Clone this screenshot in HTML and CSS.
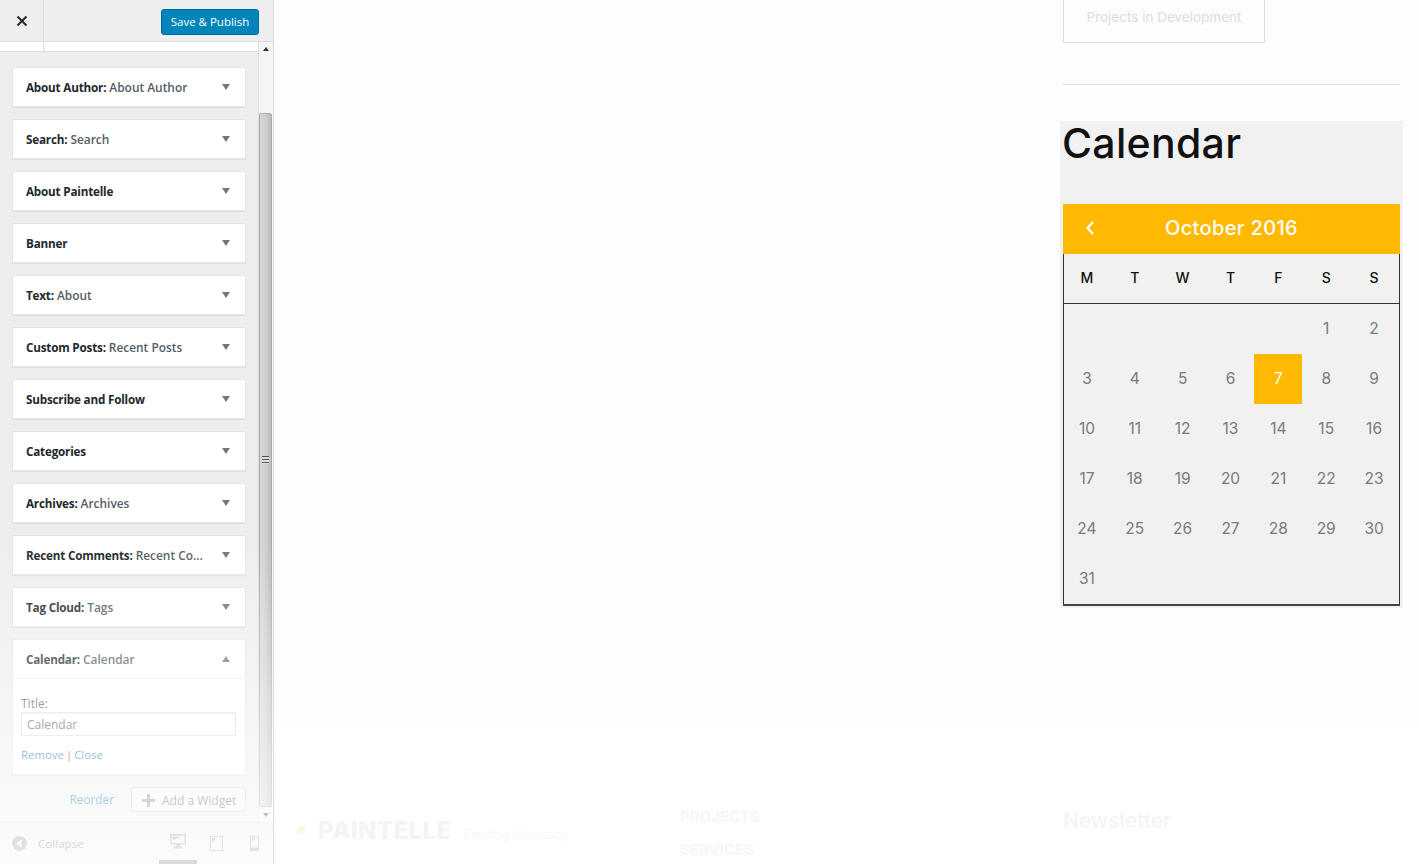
FILE: index.html
```html
<!DOCTYPE html>
<html>
<head>
    <title>Customize: Widgets</title>
    <link rel="stylesheet" href="styles.css">
</head>
<body>
    <div id="sidebar">
        <div id="side-header">
            <div id="close-btn">
                <svg width="12" height="12" viewBox="0 0 12 12"><path d="M1.5 1.5l9 9M10.5 1.5l-9 9" stroke="#23282d" stroke-width="2" fill="none"/></svg>
            </div>
            <button id="save-btn">Save &amp; Publish</button>
        </div>
        <div id="side-scroll">
            <div id="side-panel">
                <div id="panel-strip"><span id="strip-line"></span></div>
                <div id="widget-list">
                    <div class="widget"><div class="widget-top"><span class="widget-name"><b>About Author:</b> About Author</span><span class="arrow-down"></span></div></div>
                    <div class="widget"><div class="widget-top"><span class="widget-name"><b>Search:</b> Search</span><span class="arrow-down"></span></div></div>
                    <div class="widget"><div class="widget-top"><span class="widget-name"><b>About Paintelle</b></span><span class="arrow-down"></span></div></div>
                    <div class="widget"><div class="widget-top"><span class="widget-name"><b>Banner</b></span><span class="arrow-down"></span></div></div>
                    <div class="widget"><div class="widget-top"><span class="widget-name"><b>Text:</b> About</span><span class="arrow-down"></span></div></div>
                    <div class="widget"><div class="widget-top"><span class="widget-name"><b>Custom Posts:</b> Recent Posts</span><span class="arrow-down"></span></div></div>
                    <div class="widget"><div class="widget-top"><span class="widget-name"><b>Subscribe and Follow</b></span><span class="arrow-down"></span></div></div>
                    <div class="widget"><div class="widget-top"><span class="widget-name"><b>Categories</b></span><span class="arrow-down"></span></div></div>
                    <div class="widget"><div class="widget-top"><span class="widget-name"><b>Archives:</b> Archives</span><span class="arrow-down"></span></div></div>
                    <div class="widget"><div class="widget-top"><span class="widget-name"><b>Recent Comments:</b> Recent Co...</span><span class="arrow-down"></span></div></div>
                    <div class="widget"><div class="widget-top"><span class="widget-name"><b>Tag Cloud:</b> Tags</span><span class="arrow-down"></span></div></div>
                    <div class="widget">
                        <div class="widget-top open"><span class="widget-name"><b>Calendar:</b> Calendar</span><span class="arrow-up"></span></div>
                        <div class="widget-body">
                            <label for="cal-title">Title:</label>
                            <input type="text" id="cal-title" value="Calendar">
                            <div class="widget-links"><a href="#">Remove</a> <span>|</span> <a href="#">Close</a></div>
                        </div>
                    </div>
                </div>
                <div id="widget-actions">
                    <a href="#" id="reorder">Reorder</a>
                    <button id="add-widget">
                        <svg width="13" height="13" viewBox="0 0 13 13"><path d="M6.5 0v13M0 6.5h13" stroke="#82878c" stroke-width="3" fill="none"/></svg>
                        Add a Widget
                    </button>
                </div>
            </div>
            <div id="scrollbar">
                <div class="scroll-btn"><span class="scroll-up"></span></div>
                <div id="scroll-track">
                    <div id="scroll-thumb"><span id="scroll-grip"></span></div>
                </div>
                <div class="scroll-btn"><span class="scroll-down"></span></div>
            </div>
        </div>
        <div id="side-footer">
            <div id="collapse">
                <svg width="15" height="15" viewBox="0 0 15 15"><circle cx="7.5" cy="7.5" r="7.5" fill="#82878c"/><path d="M9.5 3.5v8l-5-4z" fill="#fff"/></svg>
                <span>Collapse</span>
            </div>
            <div id="devices">
                <span class="device active">
                    <svg width="16" height="15" viewBox="0 0 16 15"><path d="M0 0h16v10.500H0zM1.500 1.500v7.500h13V1.500zM6 10.500h4V12.500h2.500V14.500h-9V12.500H6z" fill="#82878c" fill-rule="evenodd"/><path d="M2.500 2.500h8l-8 4z" fill="#82878c"/></svg>
                </span>
                <span class="device">
                    <svg width="13" height="15" viewBox="0 0 13 15"><path d="M0 0h13v15H0zM1 1v13h11V1z" fill="#82878c" fill-rule="evenodd"/><path d="M2 2h5l-5 4z" fill="#82878c"/></svg>
                </span>
                <span class="device">
                    <svg width="9" height="15" viewBox="0 0 9 15"><path d="M0 0h9v15H0zM1 1v10.500h7V1z" fill="#82878c" fill-rule="evenodd"/><path d="M2 2h4l-4 3.500z" fill="#82878c"/></svg>
                </span>
            </div>
        </div>
        <div id="side-fade"></div>
    </div>

    <div id="preview">
        <div id="page-top">
            <div id="right-col">
                <a href="#" id="projects-btn">Projects in Development</a>
                <hr id="rule">
                <div id="calendar-widget">
                    <h2>Calendar</h2>
                    <div id="calendar">
                        <div id="cal-head">
                            <svg id="cal-prev" width="10" height="16" viewBox="0 0 10 16"><path d="M8 2L2.500 8 8 14" stroke="#fff" stroke-width="2.400" fill="none"/></svg>
                            <span>October 2016</span>
                        </div>
                        <div id="cal-days">
                            <span>M</span><span>T</span><span>W</span><span>T</span><span>F</span><span>S</span><span>S</span>
                        </div>
                        <div id="cal-dates">
                            <span></span><span></span><span></span><span></span><span></span><span>1</span><span>2</span>
                            <span>3</span><span>4</span><span>5</span><span>6</span><span class="today">7</span><span>8</span><span>9</span>
                            <span>10</span><span>11</span><span>12</span><span>13</span><span>14</span><span>15</span><span>16</span>
                            <span>17</span><span>18</span><span>19</span><span>20</span><span>21</span><span>22</span><span>23</span>
                            <span>24</span><span>25</span><span>26</span><span>27</span><span>28</span><span>29</span><span>30</span>
                            <span>31</span>
                        </div>
                    </div>
                </div>
            </div>
        </div>
        <div id="page-footer">
            <div id="foot-logo">
                <span id="logo-dot"></span>
                <span id="logo-name">PAINTELLE</span>
                <span id="logo-tag">Painting Company</span>
            </div>
            <div id="foot-menu">
                <div>PROJECTS</div>
                <div>SERVICES</div>
            </div>
            <div id="foot-news">Newsletter</div>
        </div>
    </div>
</body>
</html>
```

FILE: styles.css
```css
html, body {
    height: 100%;
}

body {
    margin: 0;
    height: 864px;
    overflow: hidden;
    display: flex;
    font-family: "Open Sans", "Noto Sans", sans-serif;
    background-color: #fff;
}

button {
    font-family: inherit;
}

/* sidebar */

#sidebar {
    position: relative;
    flex: 0 0 273px;
    height: 864px;
    display: flex;
    flex-direction: column;
    background-color: #eee;
    border-right: 1px solid #ddd;
}

#side-header {
    flex: 0 0 41px;
    display: flex;
    justify-content: space-between;
    align-items: center;
    padding-right: 14px;
    border-bottom: 1px solid #ddd;
}

#close-btn {
    width: 43px;
    height: 41px;
    display: flex;
    justify-content: center;
    align-items: center;
    border-right: 1px solid #ddd;
}

#save-btn {
    width: 98px;
    height: 26px;
    margin-top: 2px;
    padding: 0;
    color: #fff;
    font-size: 11.500px;
    background-color: #0085ba;
    border: 1px solid #006799;
    border-radius: 3px;
}

#side-scroll {
    flex: 1;
    min-height: 0;
    display: flex;
}

#side-panel {
    flex: 0 0 258px;
    min-width: 0;
}

#panel-strip {
    height: 9px;
    background-color: #fff;
    border-bottom: 1px solid #ddd;
}

#strip-line {
    display: block;
    width: 43px;
    height: 9px;
    border-right: 1px solid #ddd;
}

#widget-list {
    display: flex;
    flex-direction: column;
    gap: 12px;
    padding: 15px 12px 0;
}

.widget {
    background-color: #fff;
    box-shadow: 0 1px 1px rgba(0, 0, 0, 0.06);
    border: 1px solid #e5e5e5;
}

.widget-top {
    height: 38px;
    box-sizing: border-box;
    display: flex;
    justify-content: space-between;
    align-items: center;
    padding: 0 15px 1px 13px;
}

.widget-top.open {
    height: 39px;
    border-bottom: 1px solid #eee;
}

.widget-name {
    font-size: 11.900px;
    color: #555d66;
    font-weight: 600;
    white-space: nowrap;
}

.widget-name b {
    color: #23282d;
    font-size: 11.700px;
    letter-spacing: -0.200px;
    font-weight: 700;
}

.arrow-down {
    border-left: 4px solid transparent;
    border-right: 4px solid transparent;
    border-top: 6px solid #72777c;
}

.arrow-up {
    border-left: 4px solid transparent;
    border-right: 4px solid transparent;
    border-bottom: 6px solid #72777c;
}

.widget-body {
    display: flex;
    flex-direction: column;
    padding: 17px 9px 11px 8px;
    height: 95px;
    box-sizing: border-box;
}

.widget-body label {
    font-size: 12px;
    line-height: 16px;
    color: #555;
}

.widget-body input {
    height: 24px;
    box-sizing: border-box;
    padding: 0 5px;
    font-family: inherit;
    font-size: 12px;
    color: #555;
    border: 1px solid #ddd;
    box-shadow: inset 0 1px 2px rgba(0, 0, 0, 0.07);
    margin-bottom: 11px;
}

.widget-links {
    font-size: 11.400px;
    line-height: 16px;
    color: #a00;
}

.widget-links span {
    margin: 0 -1px;
}

a {
    color: #0073aa;
    text-decoration: none;
}

#widget-actions {
    display: flex;
    justify-content: flex-end;
    align-items: center;
    gap: 17px;
    padding: 12px 12px 0 0;
}

#reorder {
    padding-bottom: 2px;
    font-size: 11.800px;
}

#add-widget {
    width: 115px;
    height: 25px;
    display: flex;
    align-items: center;
    gap: 7px;
    padding: 1px 0 0 10px;
    font-size: 12px;
    color: #555;
    background-color: #f7f7f7;
    border: 1px solid #ccc;
    border-radius: 3px;
}

/* fake browser scrollbar */

#scrollbar {
    flex: 0 0 15px;
    box-sizing: border-box;
    display: flex;
    flex-direction: column;
    background-color: #f5f5f5;
    border-left: 1px solid #ddd;
}

.scroll-btn {
    flex: 0 0 14px;
    display: flex;
    justify-content: center;
    align-items: center;
}

.scroll-up {
    border-left: 3px solid transparent;
    border-right: 3px solid transparent;
    border-bottom: 4px solid #333;
}

.scroll-down {
    border-left: 3px solid transparent;
    border-right: 3px solid transparent;
    border-top: 4px solid #333;
}

#scroll-track {
    flex: 1;
    padding: 57px 1px 0 0;
}

#scroll-thumb {
    height: 694px;
    display: flex;
    justify-content: center;
    align-items: center;
    background: linear-gradient(to right, #d8d8d8, #cfcfcf 50%, #bcbcbc);
    border: 1px solid #aaa;
    border-radius: 2px;
    box-sizing: border-box;
}

#scroll-grip {
    width: 7px;
    height: 8px;
    background: repeating-linear-gradient(to bottom, #555 0, #555 1px, #ddd 1px, #ddd 3px);
}

#side-footer {
    flex: 0 0 41px;
    display: flex;
    justify-content: space-between;
    align-items: center;
    padding: 0 14px 0 12px;
    border-top: 1px solid #ddd;
}

#collapse {
    display: flex;
    align-items: center;
    gap: 11px;
    font-size: 11.600px;
    color: #555;
}

#devices {
    display: flex;
    align-self: stretch;
    align-items: center;
    gap: 27px;
}

.device {
    display: flex;
    align-items: center;
    height: 100%;
    box-sizing: border-box;
}

.device.active {
    width: 38px;
    justify-content: center;
    margin-right: -13.500px;
    border-bottom: 4px solid #555;
}

#side-fade {
    position: absolute;
    left: 0;
    right: 0;
    top: 540px;
    bottom: 0;
    background: linear-gradient(to bottom, rgba(255, 255, 255, 0) 0, rgba(255, 255, 255, 0.55) 65%, rgba(255, 255, 255, 0.8) 100%);
}

/* preview */

#preview {
    flex: 1;
    min-width: 0;
    height: 864px;
    overflow: hidden;
    padding-left: 23px;
    background: linear-gradient(to bottom, #fdfdfd 0, #fdfdfd 620px, #fff 760px);
    font-family: Inter, "Open Sans", sans-serif;
}

#page-top {
    display: grid;
    grid-template-columns: 383px 383px 337px;
    height: 800px;
}

#right-col {
    grid-column: 3;
    margin-top: -9px;
}

#projects-btn {
    display: block;
    width: 202px;
    height: 52px;
    box-sizing: border-box;
    line-height: 50px;
    text-align: center;
    color: #dcdcdc;
    font-size: 13.500px;
    border: 1px solid #ddd;
}

#rule {
    margin: 41px 0 36px;
    border: 0;
    border-top: 1px solid #ddd;
}

#calendar-widget {
    margin: 0 -3px;
    padding: 0 3px 2px;
    background-color: #f1f1f1;
}

#calendar-widget h2 {
    margin: 0 0 0 -1px;
    height: 83px;
    font-size: 41px;
    line-height: 44px;
    letter-spacing: 0.300px;
    font-weight: 500;
    color: #111;
}

#cal-head {
    position: relative;
    height: 50px;
    box-sizing: border-box;
    padding-bottom: 2px;
    display: flex;
    justify-content: center;
    align-items: center;
    color: #fff;
    font-size: 20px;
    letter-spacing: 0.350px;
    font-weight: 500;
    background-color: #ffb900;
}

#cal-prev {
    position: absolute;
    left: 22px;
    top: 16px;
}

#cal-days, #cal-dates {
    display: grid;
    grid-template-columns: repeat(7, 1fr);
    padding-right: 2px;
    box-shadow: inset 1px 0 #333, inset -1px 0 #333;
}

#cal-days {
    height: 49px;
    align-items: center;
    text-align: center;
    font-size: 14px;
    font-weight: 500;
    color: #111;
    border-bottom: 1px solid #333;
}

#cal-days span {
    padding-bottom: 2px;
}

#cal-dates {
    grid-auto-rows: 50px;
    font-size: 15.500px;
    color: #7a7a7a;
    border-bottom: 2px solid #444;
}

#cal-dates span {
    display: flex;
    justify-content: center;
    align-items: center;
    padding-bottom: 2px;
}

#cal-dates .today {
    color: #fff;
    background-color: #ffb900;
}

/* footer of the preview, almost faded out */

#page-footer {
    display: grid;
    grid-template-columns: 383px 383px 337px;
}

#foot-logo {
    display: flex;
    align-items: center;
    height: 60px;
}

#logo-dot {
    width: 9px;
    height: 9px;
    margin-right: 12px;
    border-radius: 50%;
    background-color: #fff8e0;
}

#logo-name {
    margin-right: 12px;
    font-size: 24px;
    font-weight: 800;
    letter-spacing: 0.400px;
    color: #f4f4f4;
}

#logo-tag {
    padding-top: 8px;
    font-size: 12.500px;
    letter-spacing: -0.200px;
    color: #f8f8f8;
}

#foot-menu {
    font-size: 15px;
    font-weight: 700;
    line-height: 33px;
    color: #f6f6f6;
}

#foot-news {
    padding-top: 8px;
    font-size: 21px;
    font-weight: 500;
    color: #f4f4f4;
}
```
